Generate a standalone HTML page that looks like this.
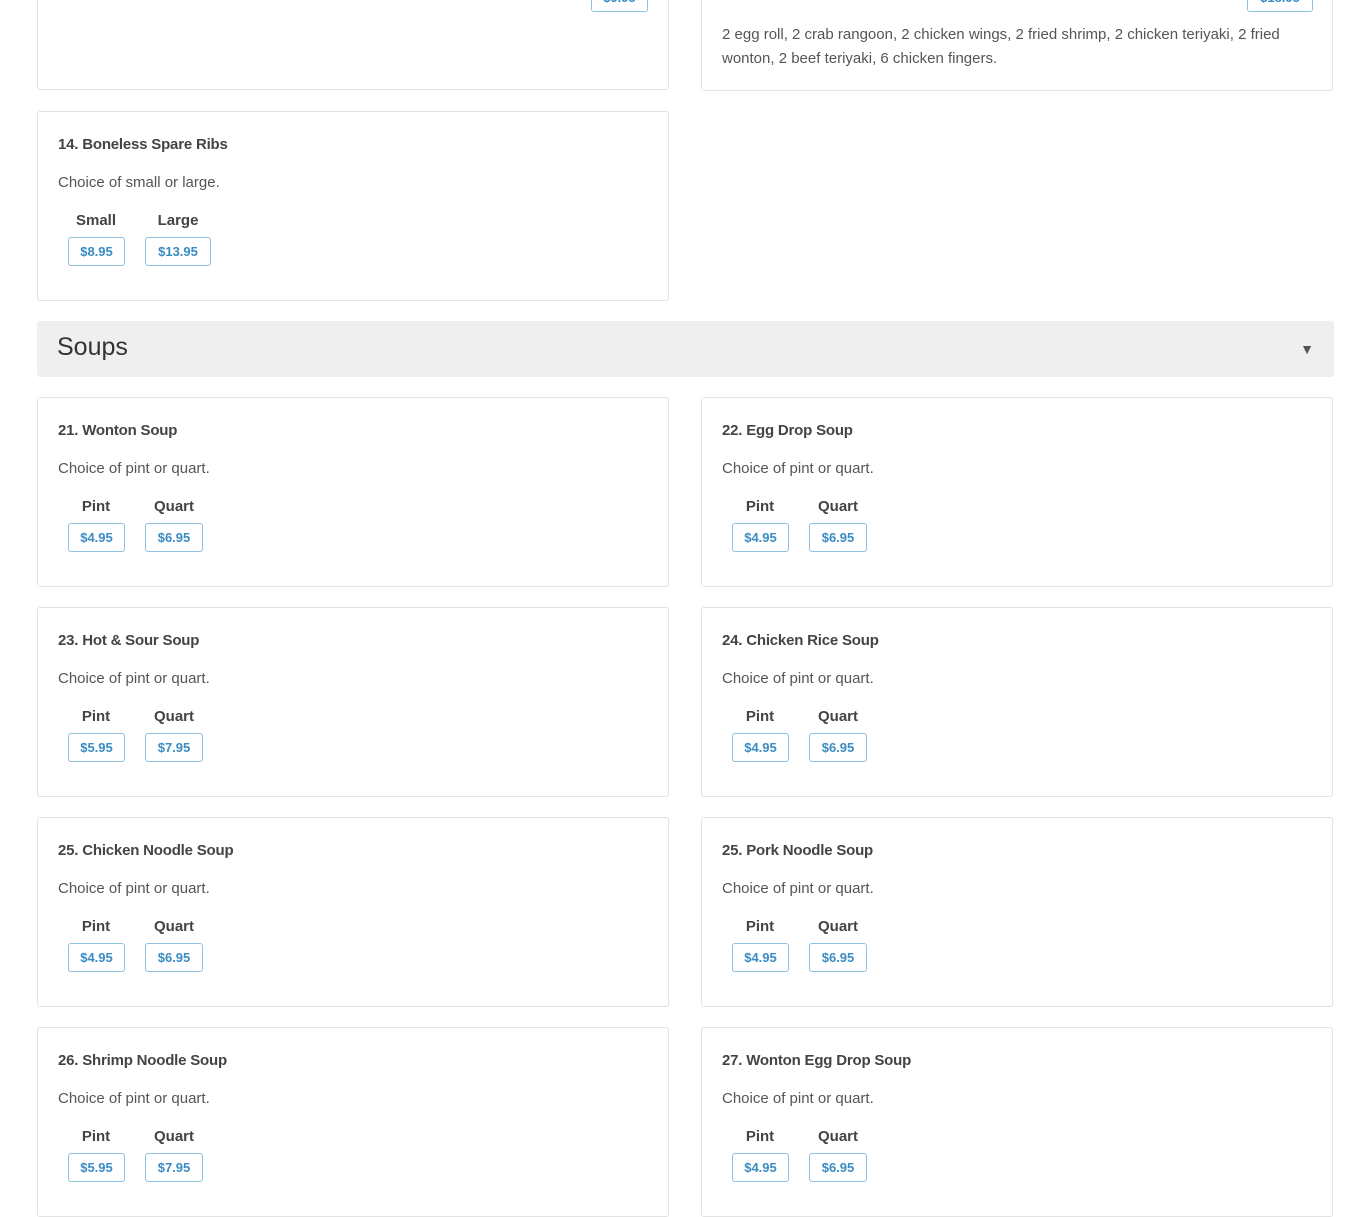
<!DOCTYPE html>
<html><head><meta charset="utf-8">
<style>
*{box-sizing:border-box;margin:0;padding:0}
body{width:1370px;height:1144px;overflow:hidden;background:#fff;font-family:"Liberation Sans",Arial,sans-serif;color:#444;position:relative}
.card{position:absolute;width:632px;height:190px;border:1px solid #e3e3e3;border-radius:3px;background:#fff}
.l{left:37px}.r{left:701px}
.t{position:absolute;left:20px;top:24px;font-size:15px;font-weight:bold;color:#444;white-space:nowrap;letter-spacing:-0.2px}
.d{position:absolute;left:20px;top:62px;font-size:15px;color:#555;white-space:nowrap}
.lab{position:absolute;top:100px;font-size:15px;font-weight:bold;color:#444;text-align:center;width:70px}
.p{position:absolute;top:125px;height:29px;border:1px solid #8ec0e0;border-radius:3px;color:#3a8cc4;font-size:13px;font-weight:bold;text-align:center;line-height:27px}
.hdr{position:absolute;left:37px;top:321px;width:1297px;height:56px;background:#efefef;border-radius:3px}
.hdr span{position:absolute;left:20px;top:12px;font-size:25px;color:#333;font-weight:500}
.hdr i{position:absolute;right:20px;top:20px;font-style:normal;font-size:14px;color:#555}
</style></head><body>

<div class="card l" style="top:-100px;height:190px">
<div class="t" style="top:82px">12. Pu Pu Platter (for 1 person)</div>
<div class="p" style="left:553px;top:82px;width:57px">$9.95</div>
</div>
<div class="card r" style="top:-100px;height:191px">
<div class="p" style="left:545px;top:82px;width:66px">$18.95</div>
<div class="d" style="top:122px;white-space:normal;width:590px;line-height:24px">2 egg roll, 2 crab rangoon, 2 chicken wings, 2 fried shrimp, 2 chicken teriyaki, 2 fried wonton, 2 beef teriyaki, 6 chicken fingers.</div>
</div>

<div class="card l" style="top:111px">
<div class="t">14. Boneless Spare Ribs</div>
<div class="d">Choice of small or large.</div>
<div class="lab" style="left:23px">Small</div><div class="lab" style="left:105px">Large</div>
<div class="p" style="left:30px;width:57px">$8.95</div><div class="p" style="left:107px;width:66px">$13.95</div>
</div>

<div class="hdr"><span>Soups</span><i>▼</i></div>

<div class="card l" style="top:397px"><div class="t">21. Wonton Soup</div><div class="d">Choice of pint or quart.</div>
<div class="lab" style="left:23px">Pint</div><div class="lab" style="left:101px">Quart</div>
<div class="p" style="left:30px;width:57px">$4.95</div><div class="p" style="left:107px;width:58px">$6.95</div></div>
<div class="card r" style="top:397px"><div class="t">22. Egg Drop Soup</div><div class="d">Choice of pint or quart.</div>
<div class="lab" style="left:23px">Pint</div><div class="lab" style="left:101px">Quart</div>
<div class="p" style="left:30px;width:57px">$4.95</div><div class="p" style="left:107px;width:58px">$6.95</div></div>

<div class="card l" style="top:607px"><div class="t">23. Hot &amp; Sour Soup</div><div class="d">Choice of pint or quart.</div>
<div class="lab" style="left:23px">Pint</div><div class="lab" style="left:101px">Quart</div>
<div class="p" style="left:30px;width:57px">$5.95</div><div class="p" style="left:107px;width:58px">$7.95</div></div>
<div class="card r" style="top:607px"><div class="t">24. Chicken Rice Soup</div><div class="d">Choice of pint or quart.</div>
<div class="lab" style="left:23px">Pint</div><div class="lab" style="left:101px">Quart</div>
<div class="p" style="left:30px;width:57px">$4.95</div><div class="p" style="left:107px;width:58px">$6.95</div></div>

<div class="card l" style="top:817px"><div class="t">25. Chicken Noodle Soup</div><div class="d">Choice of pint or quart.</div>
<div class="lab" style="left:23px">Pint</div><div class="lab" style="left:101px">Quart</div>
<div class="p" style="left:30px;width:57px">$4.95</div><div class="p" style="left:107px;width:58px">$6.95</div></div>
<div class="card r" style="top:817px"><div class="t">25. Pork Noodle Soup</div><div class="d">Choice of pint or quart.</div>
<div class="lab" style="left:23px">Pint</div><div class="lab" style="left:101px">Quart</div>
<div class="p" style="left:30px;width:57px">$4.95</div><div class="p" style="left:107px;width:58px">$6.95</div></div>

<div class="card l" style="top:1027px"><div class="t">26. Shrimp Noodle Soup</div><div class="d">Choice of pint or quart.</div>
<div class="lab" style="left:23px">Pint</div><div class="lab" style="left:101px">Quart</div>
<div class="p" style="left:30px;width:57px">$5.95</div><div class="p" style="left:107px;width:58px">$7.95</div></div>
<div class="card r" style="top:1027px"><div class="t">27. Wonton Egg Drop Soup</div><div class="d">Choice of pint or quart.</div>
<div class="lab" style="left:23px">Pint</div><div class="lab" style="left:101px">Quart</div>
<div class="p" style="left:30px;width:57px">$4.95</div><div class="p" style="left:107px;width:58px">$6.95</div></div>

</body></html>
